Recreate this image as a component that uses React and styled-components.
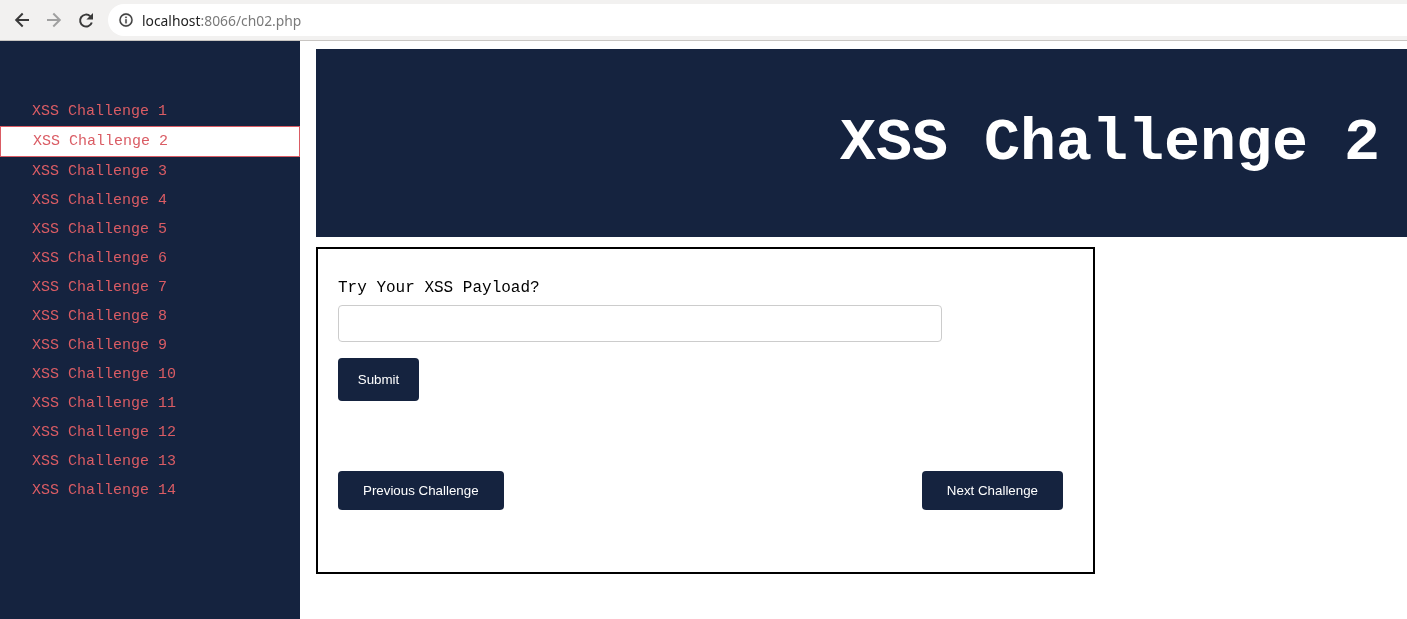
import React from "react";
import styled, { createGlobalStyle } from "styled-components";

const navy = "#15233f";
const coral = "#da5c64";

const GlobalStyle = createGlobalStyle`
  html, body {
    margin: 0;
    padding: 0;
    background: #fff;
    overflow: hidden;
  }
`;

// own layer so text is drawn with greyscale antialiasing like the reference
const Page = styled.div`
  width: 1407px;
  height: 619px;
  display: flex;
  flex-direction: column;
  overflow: hidden;
  will-change: transform;
`;

const BrowserBar = styled.header`
  height: 40px;
  flex: none;
  display: flex;
  align-items: center;
  background: #f2f1f0;
  border-bottom: 1px solid #c8c5c2;
`;

const NavIcon = styled.svg`
  width: 24px;
  height: 24px;
  margin-left: ${(p) => p.$gap}px;
  flex: none;
  fill: none;
  stroke: ${(p) => (p.$muted ? "#a0a0a0" : "#3a3a3a")};
  stroke-width: 2;
`;

const ArrowHead = styled.path`
  fill: #3a3a3a;
  stroke: none;
`;

const AddressPill = styled.div`
  flex: 1;
  height: 32px;
  margin-left: 10px;
  padding-left: 10px;
  display: flex;
  align-items: center;
  gap: 8px;
  background: #fff;
  border-radius: 16px 0 0 16px;
`;

const InfoIcon = styled.svg`
  width: 16px;
  height: 16px;
  flex: none;
  fill: #3f3f3f;
  stroke: #3f3f3f;
  stroke-width: 0.4;
`;

const Url = styled.span`
  font: 13.85px "Noto Sans", sans-serif;
  color: #7a7a7a;
  b {
    font-weight: 400;
    color: #222;
  }
`;

const Body = styled.div`
  flex: 1;
  display: flex;
  min-height: 0;
`;

const Sidebar = styled.nav`
  width: 300px;
  flex: none;
  padding-top: 56px;
  background: ${navy};
  box-sizing: border-box;
`;

const NavLink = styled.a`
  display: block;
  height: 29px;
  padding-left: 32px;
  font: 15px/29px "Liberation Mono", monospace;
  color: ${coral};
  text-decoration: none;

  ${(p) =>
    p.$active &&
    `
    box-sizing: content-box;
    background: #fff;
    border: 1px solid ${coral};
    width: 266px;
    `}
`;

const Main = styled.main`
  flex: 1;
  min-width: 0;
  padding: 8px 0 0 16px;
`;

const Banner = styled.div`
  height: 188px;
  box-sizing: border-box;
  padding-right: 27px;
  display: flex;
  align-items: center;
  justify-content: flex-end;
  background: ${navy};
`;

const Title = styled.h1`
  margin: 0;
  font: bold 60px "Liberation Mono", monospace;
  color: #fff;
`;

const Card = styled.section`
  width: 779px;
  height: 327px;
  margin-top: 10px;
  padding: 29px 30px 0 20px;
  box-sizing: border-box;
  border: 2px solid #000;
`;

const Label = styled.label`
  display: block;
  font: 16px/20px "Liberation Mono", monospace;
  color: #000;
`;

const Input = styled.input`
  display: block;
  width: 604px;
  height: 37px;
  margin-top: 7px;
  box-sizing: border-box;
  background: #fff;
  border: 1px solid #ccc;
  border-radius: 4px;
  outline: 0;
`;

const Button = styled.button`
  display: block;
  height: ${(p) => p.$height}px;
  padding: 0 25px;
  border: 0;
  border-radius: 4px;
  background: ${navy};
  color: #fff;
  font: 13.333px "Liberation Sans", sans-serif;
`;

const SubmitButton = styled(Button)`
  width: 81px;
  padding: 0;
  margin-top: 16px;
`;

const Pager = styled.div`
  display: flex;
  justify-content: space-between;
  margin-top: 70px;
`;

const challenges = Array.from({ length: 14 }, (_, i) => i + 1);

const App = () => {
  return (
    <Page>
      <GlobalStyle />
      <BrowserBar>
        <NavIcon $gap={10} viewBox="0 0 24 24">
          <path d="M19 12H6.5M12.7 5.5 6.2 12l6.5 6.5" />
        </NavIcon>
        <NavIcon $gap={8} $muted viewBox="0 0 24 24">
          <path d="M5 12h12.5M11.3 5.5l6.5 6.5-6.5 6.5" />
        </NavIcon>
        <NavIcon $gap={8} viewBox="0 0 24 24">
          <path d="M17.8 14.5A6 6 0 1 1 16.2 8.2" />
          <ArrowHead d="M19 5v6.6h-6.6z" />
        </NavIcon>
        <AddressPill>
          <InfoIcon viewBox="0 0 24 24">
            <path d="M11 7h2v2h-2zm0 4h2v6h-2zm1-9a10 10 0 1 0 0 20 10 10 0 0 0 0-20zm0 18a8 8 0 1 1 0-16 8 8 0 0 1 0 16z" />
          </InfoIcon>
          <Url>
            <b>localhost</b>:8066/ch02.php
          </Url>
        </AddressPill>
      </BrowserBar>
      <Body>
        <Sidebar>
          {challenges.map((n) => (
            <NavLink key={n} href="#" $active={n === 2}>
              XSS Challenge {n}
            </NavLink>
          ))}
        </Sidebar>
        <Main>
          <Banner>
            <Title>XSS Challenge 2</Title>
          </Banner>
          <Card>
            <Label>Try Your XSS Payload?</Label>
            <Input type="text" />
            <SubmitButton $height={43}>Submit</SubmitButton>
            <Pager>
              <Button $height={39}>Previous Challenge</Button>
              <Button $height={39}>Next Challenge</Button>
            </Pager>
          </Card>
        </Main>
      </Body>
    </Page>
  );
};

export default App;
